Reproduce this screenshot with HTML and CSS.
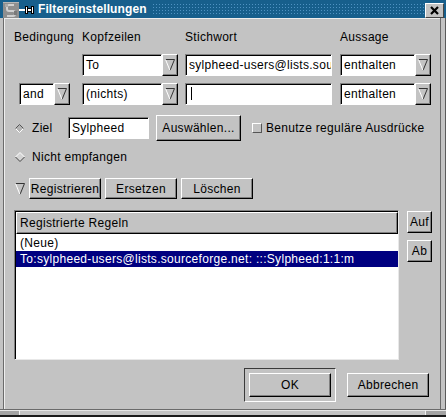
FILE: index.html
```html
<!DOCTYPE html>
<html>
<head>
<meta charset="utf-8">
<title>Filtereinstellungen</title>
<link rel="stylesheet" href="styles.css">
</head>
<body>
<div class="window">
  <div class="titlebar">
    <svg class="appicon" width="16" height="16" viewBox="0 0 16 16">
      <rect x="0" y="0" width="16" height="16" fill="#8f8f8f"/>
      <rect x="0" y="0" width="16" height="1" fill="#b5b5b5"/>
      <path d="M11 3 H6 Q4 3 4 5 V7 Q4 9 6 9 H10 Q12 9 12 11 V12 Q12 14 10 14 H4" stroke="#d0d0d0" stroke-width="2" fill="none"/>
      <rect x="2" y="2" width="3" height="3" fill="#a9a9a9"/>
      <rect x="11" y="9" width="3" height="4" fill="#7a7a7a"/>
    </svg>
    <svg class="pin" width="15" height="8" viewBox="0 0 15 8">
      <rect x="0" y="3" width="6" height="2" fill="#fff"/>
      <rect x="6" y="0" width="3" height="8" fill="#000"/>
      <rect x="7" y="1" width="1" height="6" fill="#fff"/>
      <rect x="9" y="2" width="4" height="4" fill="#000"/>
      <rect x="9" y="3" width="4" height="2" fill="#fff"/>
      <rect x="12" y="0" width="3" height="8" fill="#000"/>
      <rect x="13" y="1" width="1" height="6" fill="#fff"/>
    </svg>
    <span class="title">Filtereinstellungen</span>
    <span class="dots"></span>
    <span class="close">
      <svg width="9" height="9" viewBox="0 0 9 9"><path d="M1 1 L8 8 M8 1 L1 8" stroke="#000" stroke-width="2.2"/></svg>
    </span>
  </div>

  <div class="client">
    <div class="row labels">
      <div class="c1">Bedingung</div>
      <div class="c2">Kopfzeilen</div>
      <div class="c3">Stichwort</div>
      <div class="c4">Aussage</div>
    </div>

    <div class="row r1">
      <div class="c1"></div>
      <div class="c2">
        <div class="combo">
          <div class="entry w80">To</div>
          <div class="arrowbtn raised">
            <svg width="10" height="12" viewBox="0 0 10 12"><path d="M0.5 0.5 H9.5 L5 11.5" stroke="#333" fill="none"/><path d="M0.5 0.5 L5 11.5" stroke="#fff" fill="none"/></svg>
          </div>
        </div>
      </div>
      <div class="c3"><div class="entry w147">sylpheed-users@lists.sourceforge.net</div></div>
      <div class="c4">
        <div class="combo">
          <div class="entry w75">enthalten</div>
          <div class="arrowbtn raised">
            <svg width="10" height="12" viewBox="0 0 10 12"><path d="M0.5 0.5 H9.5 L5 11.5" stroke="#333" fill="none"/><path d="M0.5 0.5 L5 11.5" stroke="#fff" fill="none"/></svg>
          </div>
        </div>
      </div>
    </div>

    <div class="row r2">
      <div class="c1">
        <div class="combo andcombo">
          <div class="entry w35">and</div>
          <div class="arrowbtn raised">
            <svg width="10" height="12" viewBox="0 0 10 12"><path d="M0.5 0.5 H9.5 L5 11.5" stroke="#333" fill="none"/><path d="M0.5 0.5 L5 11.5" stroke="#fff" fill="none"/></svg>
          </div>
        </div>
      </div>
      <div class="c2">
        <div class="combo">
          <div class="entry w80">(nichts)</div>
          <div class="arrowbtn raised">
            <svg width="10" height="12" viewBox="0 0 10 12"><path d="M0.5 0.5 H9.5 L5 11.5" stroke="#333" fill="none"/><path d="M0.5 0.5 L5 11.5" stroke="#fff" fill="none"/></svg>
          </div>
        </div>
      </div>
      <div class="c3"><div class="entry w147"><span class="caret"></span></div></div>
      <div class="c4">
        <div class="combo">
          <div class="entry w75">enthalten</div>
          <div class="arrowbtn raised">
            <svg width="10" height="12" viewBox="0 0 10 12"><path d="M0.5 0.5 H9.5 L5 11.5" stroke="#333" fill="none"/><path d="M0.5 0.5 L5 11.5" stroke="#fff" fill="none"/></svg>
          </div>
        </div>
      </div>
    </div>

    <div class="row r3">
      <svg class="radio" width="9" height="9" viewBox="0 0 9 9"><polygon points="4.5,0.5 8.5,4.5 4.5,8.5 0.5,4.5" fill="#b4b4b4"/><path d="M0.5 4.5 L4.5 8.5 L8.5 4.5" stroke="#fff" fill="none"/><path d="M0.5 4.5 L4.5 0.5 L8.5 4.5" stroke="#555" fill="none"/></svg>
      <span class="rlabel">Ziel</span>
      <div class="entry w81">Sylpheed</div>
      <div class="btn raised wsel">Auswählen...</div>
      <span class="check"></span>
      <span class="checklabel">Benutze reguläre Ausdrücke</span>
    </div>

    <div class="row r4">
      <svg class="radio radio2" width="10" height="10" viewBox="0 0 10 10"><polygon points="5,0.5 9.5,5 5,9.5 0.5,5" fill="#d4d4d4"/><path d="M0.5 5 L5 9.5 L9.5 5" stroke="#444" fill="none"/><path d="M0.5 5 L5 0.5 L9.5 5" stroke="#fff" fill="none"/></svg>
      <span class="rlabel2">Nicht empfangen</span>
    </div>

    <div class="row r5">
      <svg class="expander" width="10" height="12" viewBox="0 0 10 12"><path d="M0.5 0.5 H9.5 L5 11.5" stroke="#333" fill="none"/><path d="M0.5 0.5 L5 11.5" stroke="#fff" fill="none"/></svg>
      <div class="btn raised w72">Registrieren</div>
      <div class="btn raised w72">Ersetzen</div>
      <div class="btn raised w72">Löschen</div>
    </div>

    <div class="row listrow">
      <div class="clist">
        <div class="clhead raised">Registrierte Regeln</div>
        <div class="clrow first">(Neue)</div>
        <div class="clrow sel">To:sylpheed-users@lists.sourceforge.net: :::Sylpheed:1:1:m</div>
      </div>
      <div class="side">
        <div class="btn raised sbtn">Auf</div>
        <div class="btn raised sbtn ab">Ab</div>
      </div>
    </div>

    <div class="row btnrow">
      <div class="okframe"><div class="btn raised okbtn">OK</div></div>
      <div class="btn raised cancel">Abbrechen</div>
    </div>
  </div>

  <div class="bottombar">
    <span class="handle left"></span>
    <span class="mid"></span>
    <span class="handle right"></span>
  </div>
</div>
</body>
</html>
```

FILE: styles.css
```css
* { box-sizing: border-box; }
html, body { margin: 0; padding: 0; }
body {
  width: 446px;
  height: 417px;
  overflow: hidden;
  background: #c3c3c3;
  font-family: "Liberation Sans", Arial, sans-serif;
  font-size: 12px;
  letter-spacing: 0.3px;
  color: #000;
}
.window {
  width: 446px;
  height: 417px;
  display: flex;
  flex-direction: column;
  background: #c3c3c3;
  box-shadow: inset -1px 0 #5a5a5a;
}

/* title bar */
.titlebar {
  height: 18px;
  flex: none;
  display: flex;
  align-items: flex-start;
  background: #175f8c;
}
.appicon { flex: none; margin: 2px 0 0 3px; display: block; }
.pin { flex: none; margin: 6px 0 0 0; display: block; }
.title {
  margin: 2px 0 0 4px;
  line-height: 14px;
  color: #fff;
  font-weight: bold;
  font-size: 12px;
  letter-spacing: 0.1px;
  white-space: nowrap;
}
.dots {
  flex: 1;
  height: 14px;
  margin: 2px 1px 0 4px;
  background:
    linear-gradient(90deg, #175f8c 2px, transparent 2px) 0 0 / 3px 3px,
    linear-gradient(#175f8c 2px, #4f92c2 2px) 0 0 / 3px 3px;
}
.close {
  flex: none;
  width: 19px;
  height: 15px;
  margin: 3px 2px 0 0;
  background: #c3c3c3;
  border: 1px solid;
  border-color: #fff #444 #444 #fff;
  display: flex;
  align-items: center;
  justify-content: center;
}
.close svg { display: block; }

/* client area */
.client {
  flex: 1;
  margin: 0 5px 0 3px;
  border-left: 1px solid #6b6b6b;
  border-right: 1px solid #6b6b6b;
  box-shadow: inset 1px 1px #eeeeee;
  padding: 12px 0 0 10px;
}
.row { display: flex; align-items: center; flex: none; }
.labels { height: 14px; line-height: 14px; }
.r1 { margin-top: 10px; height: 22px; }
.r2 { margin-top: 7px; height: 22px; }
.r3 { margin-top: 10px; height: 26px; }
.r4 { margin-top: 8px; height: 15px; }
.r5 { margin-top: 14px; height: 21px; }
.listrow { margin-top: 11px; height: 150px; align-items: flex-start; }
.btnrow { margin-top: 8px; height: 34px; justify-content: flex-end; padding-right: 11px; }

.c1 { width: 68px; flex: none; }
.c2 { width: 103px; flex: none; }
.c3 { width: 155px; flex: none; }
.c4 { width: 91px; flex: none; }

/* widgets */
.combo { display: flex; height: 22px; }
.andcombo { margin-left: 5px; }
.entry {
  flex: none;
  height: 22px;
  background: #fff;
  border: 1px solid;
  border-color: #808080 #fff #fff #808080;
  box-shadow: inset 1px 1px #000;
  padding: 0 2px 0 3px;
  line-height: 20px;
  white-space: nowrap;
  overflow: hidden;
}
.w35 { width: 35px; }
.w75 { width: 75px; }
.w80 { width: 80px; }
.w81 { width: 81px; }
.w147 { width: 147px; }
.caret {
  display: inline-block;
  width: 1px;
  height: 13px;
  background: #000;
  vertical-align: middle;
  margin-left: 2px;
  margin-top: -2px;
}
.raised {
  background: #c3c3c3;
  border: 1px solid;
  border-color: #fff #000 #000 #fff;
  box-shadow: inset -1px -1px #808080;
}
.arrowbtn {
  flex: none;
  width: 16px;
  height: 22px;
  display: flex;
  align-items: center;
  justify-content: center;
}
.arrowbtn svg, .radio, .expander { display: block; flex: none; }
.btn {
  flex: none;
  display: flex;
  align-items: center;
  justify-content: center;
  white-space: nowrap;
}
.radio { margin-left: 1px; }
.radio2 { margin-left: 1px; }
.rlabel { width: 36px; margin-left: 8px; flex: none; }
.rlabel2 { margin-left: 7px; }
.wsel { width: 85px; height: 26px; margin-left: 7px; }
.check {
  flex: none;
  width: 10px;
  height: 10px;
  margin-left: 11px;
  background: #c3c3c3;
  border: 1px solid;
  border-color: #fff #555 #555 #fff;
}
.checklabel { margin-left: 4px; white-space: nowrap; }

.expander { margin-left: 1px; }
.w72 { width: 72px; height: 21px; margin-left: 4px; }

/* list */
.clist {
  flex: none;
  width: 385px;
  height: 150px;
  background: #fff;
  border: 1px solid;
  border-color: #808080 #e8e8e8 #e8e8e8 #808080;
  box-shadow: inset 1px 1px #000;
  padding: 1px 0 0 1px;
}
.clhead {
  height: 22px;
  line-height: 20px;
  padding-left: 3px;
  white-space: nowrap;
}
.clrow {
  height: 16px;
  line-height: 16px;
  padding-left: 4px;
  white-space: nowrap;
  overflow: hidden;
}
.clrow.first { margin-top: 1px; }
.clrow.sel { background: #000080; color: #fff; }
.side { flex: none; margin-left: 8px; display: flex; flex-direction: column; }
.sbtn { width: 25px; height: 22px; margin-top: 1px; }
.sbtn.ab { margin-top: 7px; }

/* bottom buttons */
.okframe {
  flex: none;
  width: 92px;
  height: 34px;
  border: 1px solid;
  border-color: #3a3a3a #fff #fff #3a3a3a;
  padding: 4px;
}
.okbtn { width: 82px; height: 24px; }
.cancel { width: 82px; height: 24px; margin-left: 11px; }

/* bottom frame */
.bottombar {
  flex: none;
  height: 8px;
  display: flex;
  border-top: 1px solid #6b6b6b;
  border-bottom: 2px solid #1a1a1a;
  box-shadow: inset 0 1px #e6e6e6;
}
.handle { flex: none; background: #a3a3a3; box-shadow: inset 0 1px #e6e6e6; }
.handle.left { width: 20px; border-right: 1px solid #f0f0f0; }
.handle.right { width: 21px; border-left: 1px solid #f0f0f0; }
.mid { flex: 1; }
```
